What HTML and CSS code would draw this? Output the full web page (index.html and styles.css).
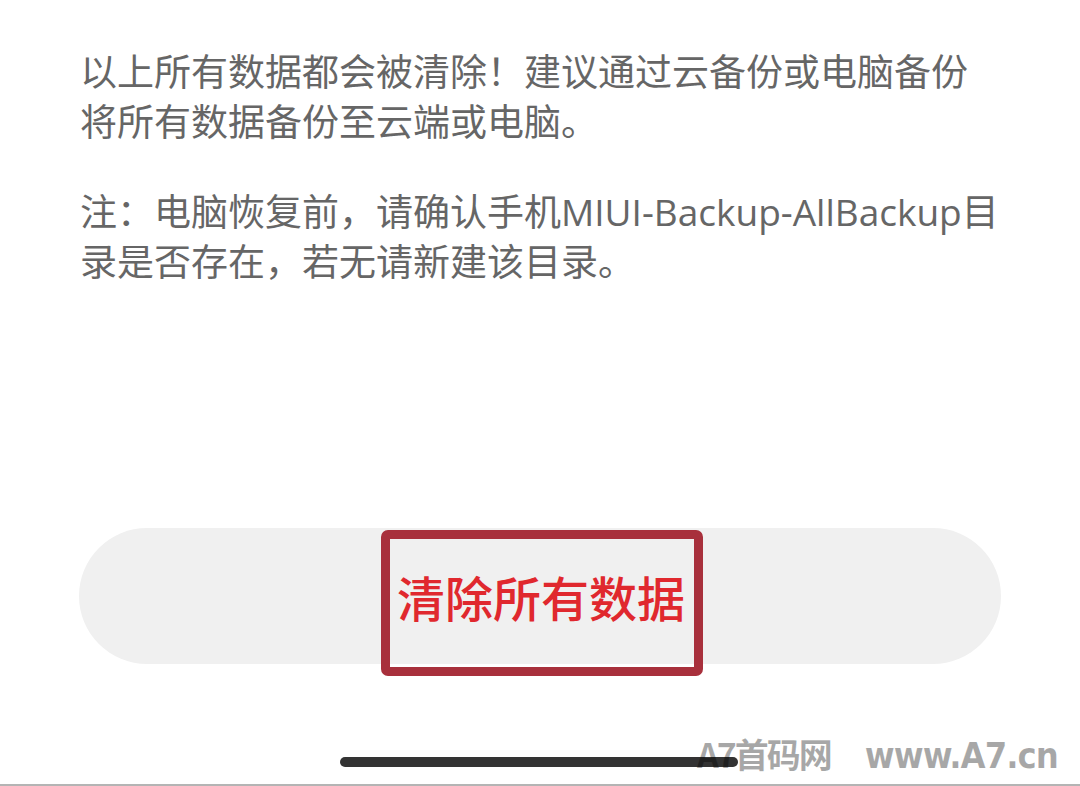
FILE: index.html
```html
<!DOCTYPE html>
<html lang="zh-CN">

<head>
    <meta charset="UTF-8">
    <meta name="viewport" content="width=device-width, initial-scale=1.0">
    <title>清除所有数据</title>
    <link rel="stylesheet" href="styles.css">
</head>

<body>
    <div class="page">
        <div class="notice">
            <p>以上所有数据都会被清除！建议通过云备份或电脑备份将所有数据备份至云端或电脑。</p>
            <p>注：电脑恢复前，请确认手机MIUI-Backup-AllBackup目录是否存在，若无请新建该目录。</p>
        </div>

        <div class="actions">
            <button class="clear-btn">清除所有数据</button>
            <div class="mark"></div>
        </div>

        <div class="bottom">
            <div class="home-bar"></div>
            <div class="watermark"><span class="wm-name">A7首码网</span><span class="wm-url">www.A7.cn</span></div>
        </div>
    </div>
</body>

</html>
```

FILE: styles.css
```css
* {
    padding: 0;
    margin: 0;
    box-sizing: border-box;
}

body {
    background: #fff;
    font-family: "Noto Sans CJK SC", "Noto Sans", sans-serif;
}

.page {
    width: 1080px;
    height: 786px;
    display: flex;
    flex-direction: column;
    border-bottom: 2px solid #b4b4b4;
    overflow: hidden;
}

/* 拉丁字母用 Open Sans，汉字回落到思源黑体 */
.notice {
    padding: 47px 80px 0 80px;
    color: #666;
    font-family: "Open Sans", "Noto Sans CJK SC", sans-serif;
    font-size: 37px;
    line-height: 50px;
}

.notice p+p {
    margin-top: 40px;
}

.actions {
    position: relative;
    margin: 241px 79px 0 79px;
}

.clear-btn {
    display: block;
    width: 100%;
    height: 136px;
    border: none;
    border-radius: 68px;
    background: #f0f0f0;
    color: #e0282e;
    font-family: "Noto Sans CJK SC", sans-serif;
    font-size: 48px;
    font-weight: 500;
    padding-left: 2px;
}

/* 红框标注 */
.mark {
    position: absolute;
    left: 302px;
    top: 2px;
    width: 322px;
    height: 146px;
    border: 9px solid #a8303c;
    border-radius: 7px;
}

.bottom {
    position: relative;
    height: 88px;
}

.home-bar {
    position: absolute;
    left: 340px;
    top: 93px;
    width: 398px;
    height: 10px;
    border-radius: 5px;
    background: #333;
}

.watermark {
    position: absolute;
    left: 697px;
    top: 68px;
    display: flex;
    align-items: baseline;
    gap: 34px;
    color: rgba(0, 0, 0, .34);
    font-weight: bold;
    line-height: 44px;
}

.wm-name {
    font-family: "Noto Sans CJK SC", sans-serif;
    font-size: 34px;
    letter-spacing: -2px;
}

.wm-url {
    font-family: "DejaVu Sans Condensed", "DejaVu Sans", sans-serif;
    font-size: 36px;
    letter-spacing: -1px;
}
```
